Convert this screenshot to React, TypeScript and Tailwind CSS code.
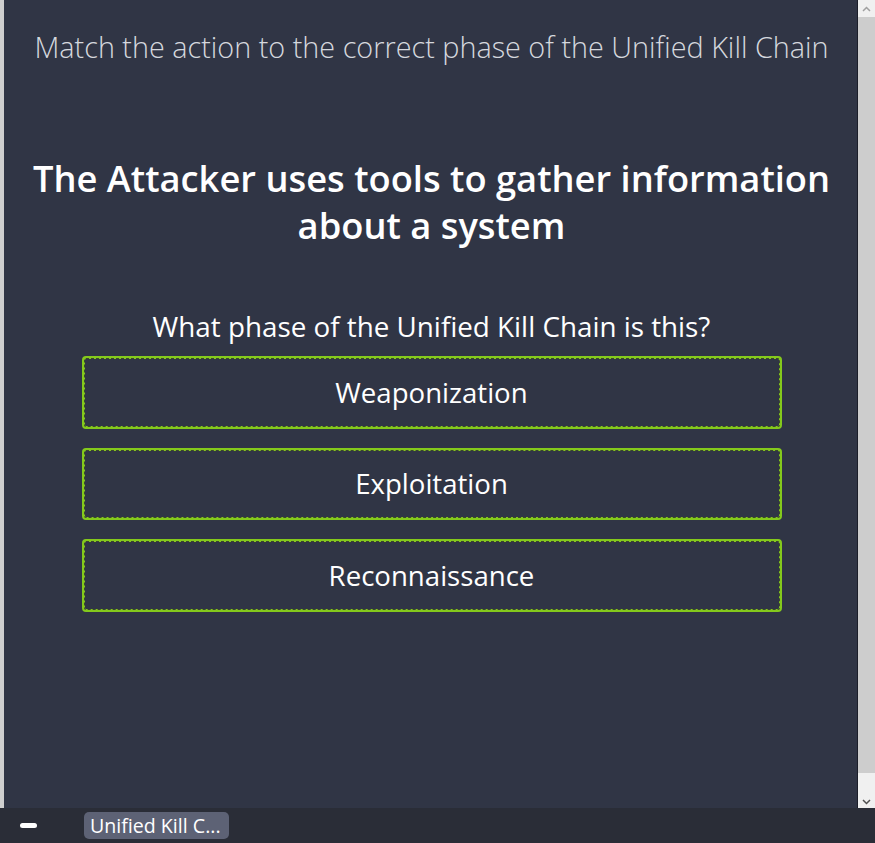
import React from "react";

const font = { fontFamily: '"Open Sans", "Noto Sans", "DejaVu Sans", sans-serif' };

function Option({ label }: { label: string }) {
  return (
    <button
      className="w-[700px] h-[72.5px] rounded-[4px] border-[3px] border-[#84c91c] outline-1 outline-dashed outline-[#3b4430] outline-offset-[-3px] text-white text-[27.6px] flex items-center justify-center bg-transparent"
      style={font}
    >
      {label}
    </button>
  );
}

export default function App() {
  return (
    <div className="w-[875px] h-[843px] flex flex-col bg-[#2a2d37] overflow-hidden" style={font}>
      <div className="flex h-[808px]">
        <div className="w-[4px] bg-[#cfcfcf]" />
        <div className="w-[853px] pl-[2px] bg-[#303545] flex flex-col items-center">
          <div className="mt-[25px] text-[28.8px] leading-[43px] font-light text-[#d5d8de] whitespace-nowrap">
            Match the action to the correct phase of the Unified Kill Chain
          </div>
          <div className="mt-[87px] text-[36.3px] font-semibold text-white text-center leading-[47px] w-[830px]">
            The Attacker uses tools to gather information about a system
          </div>
          <div className="mt-[60px] text-[27.8px] text-white leading-[34px]">
            What phase of the Unified Kill Chain is this?
          </div>
          <div className="mt-[13px] flex flex-col gap-[19px]">
            <Option label="Weaponization" />
            <Option label="Exploitation" />
            <Option label="Reconnaissance" />
          </div>
        </div>
        <div className="w-[1px] bg-[#1b1e29]" />
        <div className="w-[17px] flex flex-col bg-[#f0f0f0]">
          <div className="h-[17px] flex items-center justify-center">
            <svg width="9" height="6" viewBox="0 0 9 6">
              <path d="M1 5 L4.5 1.5 L8 5" stroke="#a0a0a0" strokeWidth="1.5" fill="none" />
            </svg>
          </div>
          <div className="flex-1 bg-[#cdcdcd]" />
          <div className="h-[35px] flex items-end justify-center pb-[3px]">
            <svg width="9" height="6" viewBox="0 0 9 6">
              <path d="M1 1 L4.5 4.5 L8 1" stroke="#505050" strokeWidth="1.5" fill="none" />
            </svg>
          </div>
        </div>
      </div>
      <div className="h-[35px] flex items-center bg-[#2a2d37]">
        <div className="ml-[20px] w-[17px] h-[5px] rounded-full bg-white" />
        <div className="ml-[47px] h-[27px] pl-[6px] pr-[8px] rounded-[5px] bg-[#5d6275] text-white text-[19.6px] flex items-center">
          Unified Kill C...
        </div>
      </div>
    </div>
  );
}
